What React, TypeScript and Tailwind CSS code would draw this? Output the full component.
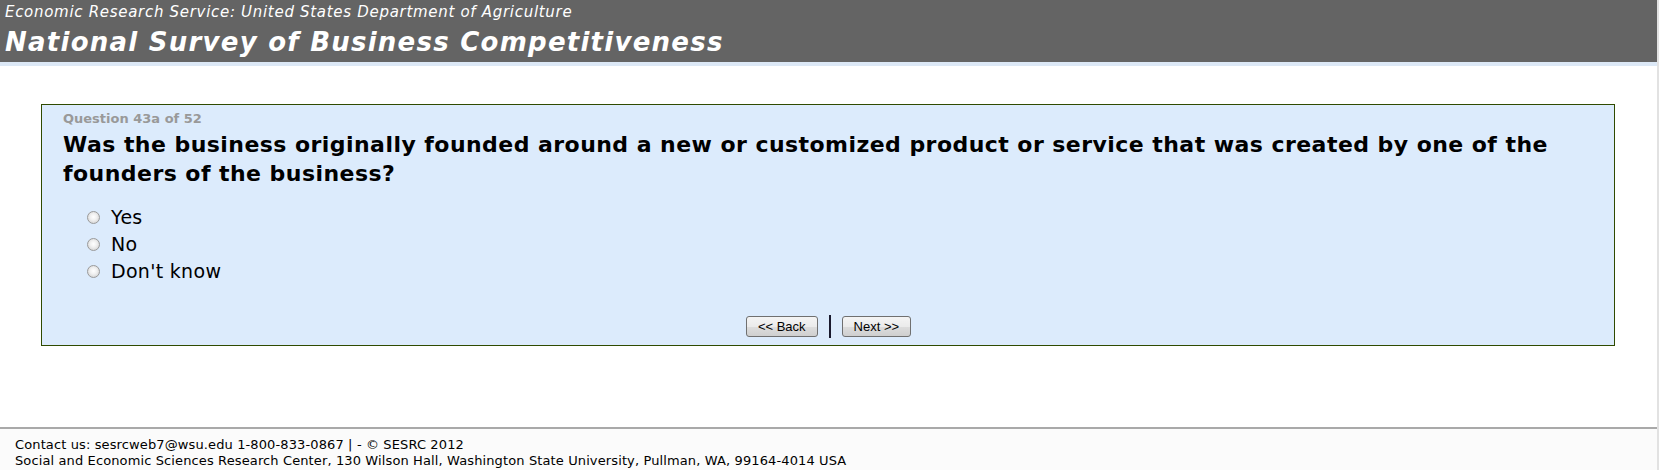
import React from "react";

const options = ["Yes", "No", "Don't know"];

function Radio() {
    return (
        <span className="inline-block w-[13px] h-[13px] rounded-full border border-[#9a9a9a] bg-[radial-gradient(circle_at_50%_45%,#ffffff_0%,#f0f0f0_40%,#c9c9c9_100%)] shrink-0" />
    );
}

function NavButton({ label }: { label: string }) {
    return (
        <button className="h-[21px] px-[11px] rounded-[3px] border border-[#707070] bg-[linear-gradient(#f4f4f4,#ebebeb_50%,#dddddd_51%,#cfcfcf)] text-[13px] leading-[19px] text-black font-['Liberation_Sans',Arial,sans-serif]">
            {label}
        </button>
    );
}

export default function App() {
    return (
        <div className="w-[1659px] h-[470px] bg-white font-['DejaVu_Sans',Verdana,sans-serif] text-black border-r-2 border-[#e2e2e2] flex flex-col overflow-hidden">
            <div className="h-[66px] bg-[#646464] border-b-4 border-[#dce8f6] pl-[5px] text-white">
                <p className="italic text-[15px] tracking-[0.7px] leading-[18px] pt-[3px]">Economic Research Service: United States Department of Agriculture</p>
                <h1 className="italic font-bold text-[26px] tracking-[1.25px] leading-[30px] mt-[6px]">National Survey of Business Competitiveness</h1>
            </div>

            <div className="pt-[38px] pl-[41px] pr-[42px]">
                <div className="h-[242px] border border-[#2f4a00] bg-[#dcebfc] pl-[21px] pr-[20px] flex flex-col">
                    <p className="text-[13px] font-bold text-[#999999] leading-[15px] mt-[6px]">Question 43a of 52</p>
                    <h2 className="text-[22px] tracking-[0.45px] font-bold leading-[29px] mt-[4px]">
                        Was the business originally founded around a new or customized product or service that was created by one of the founders of the business?
                    </h2>
                    <div className="mt-[16px] pl-[24px] flex flex-col">
                        {options.map((opt) => (
                            <label key={opt} className="flex items-center gap-[11px] h-[27px] text-[19px] tracking-[0.3px]">
                                <Radio />
                                <span>{opt}</span>
                            </label>
                        ))}
                    </div>
                    <div className="flex-1" />
                    <div className="flex items-center justify-center gap-[11px] pb-[7px]">
                        <NavButton label="<< Back" />
                        <span className="w-[2px] h-[23px] bg-[#1a1a2e]" />
                        <NavButton label="Next >>" />
                    </div>
                </div>
            </div>

            <div className="flex-1" />

            <div className="h-[43px] border-t-2 border-[#a9a9a9] bg-[#fbfbfb] pl-[15px] pt-[8px] text-[13px] tracking-[0.12px] leading-[16px]">
                <p>Contact us: sesrcweb7@wsu.edu 1-800-833-0867 | - © SESRC 2012</p>
                <p>Social and Economic Sciences Research Center, 130 Wilson Hall, Washington State University, Pullman, WA, 99164-4014 USA</p>
            </div>
        </div>
    );
}
